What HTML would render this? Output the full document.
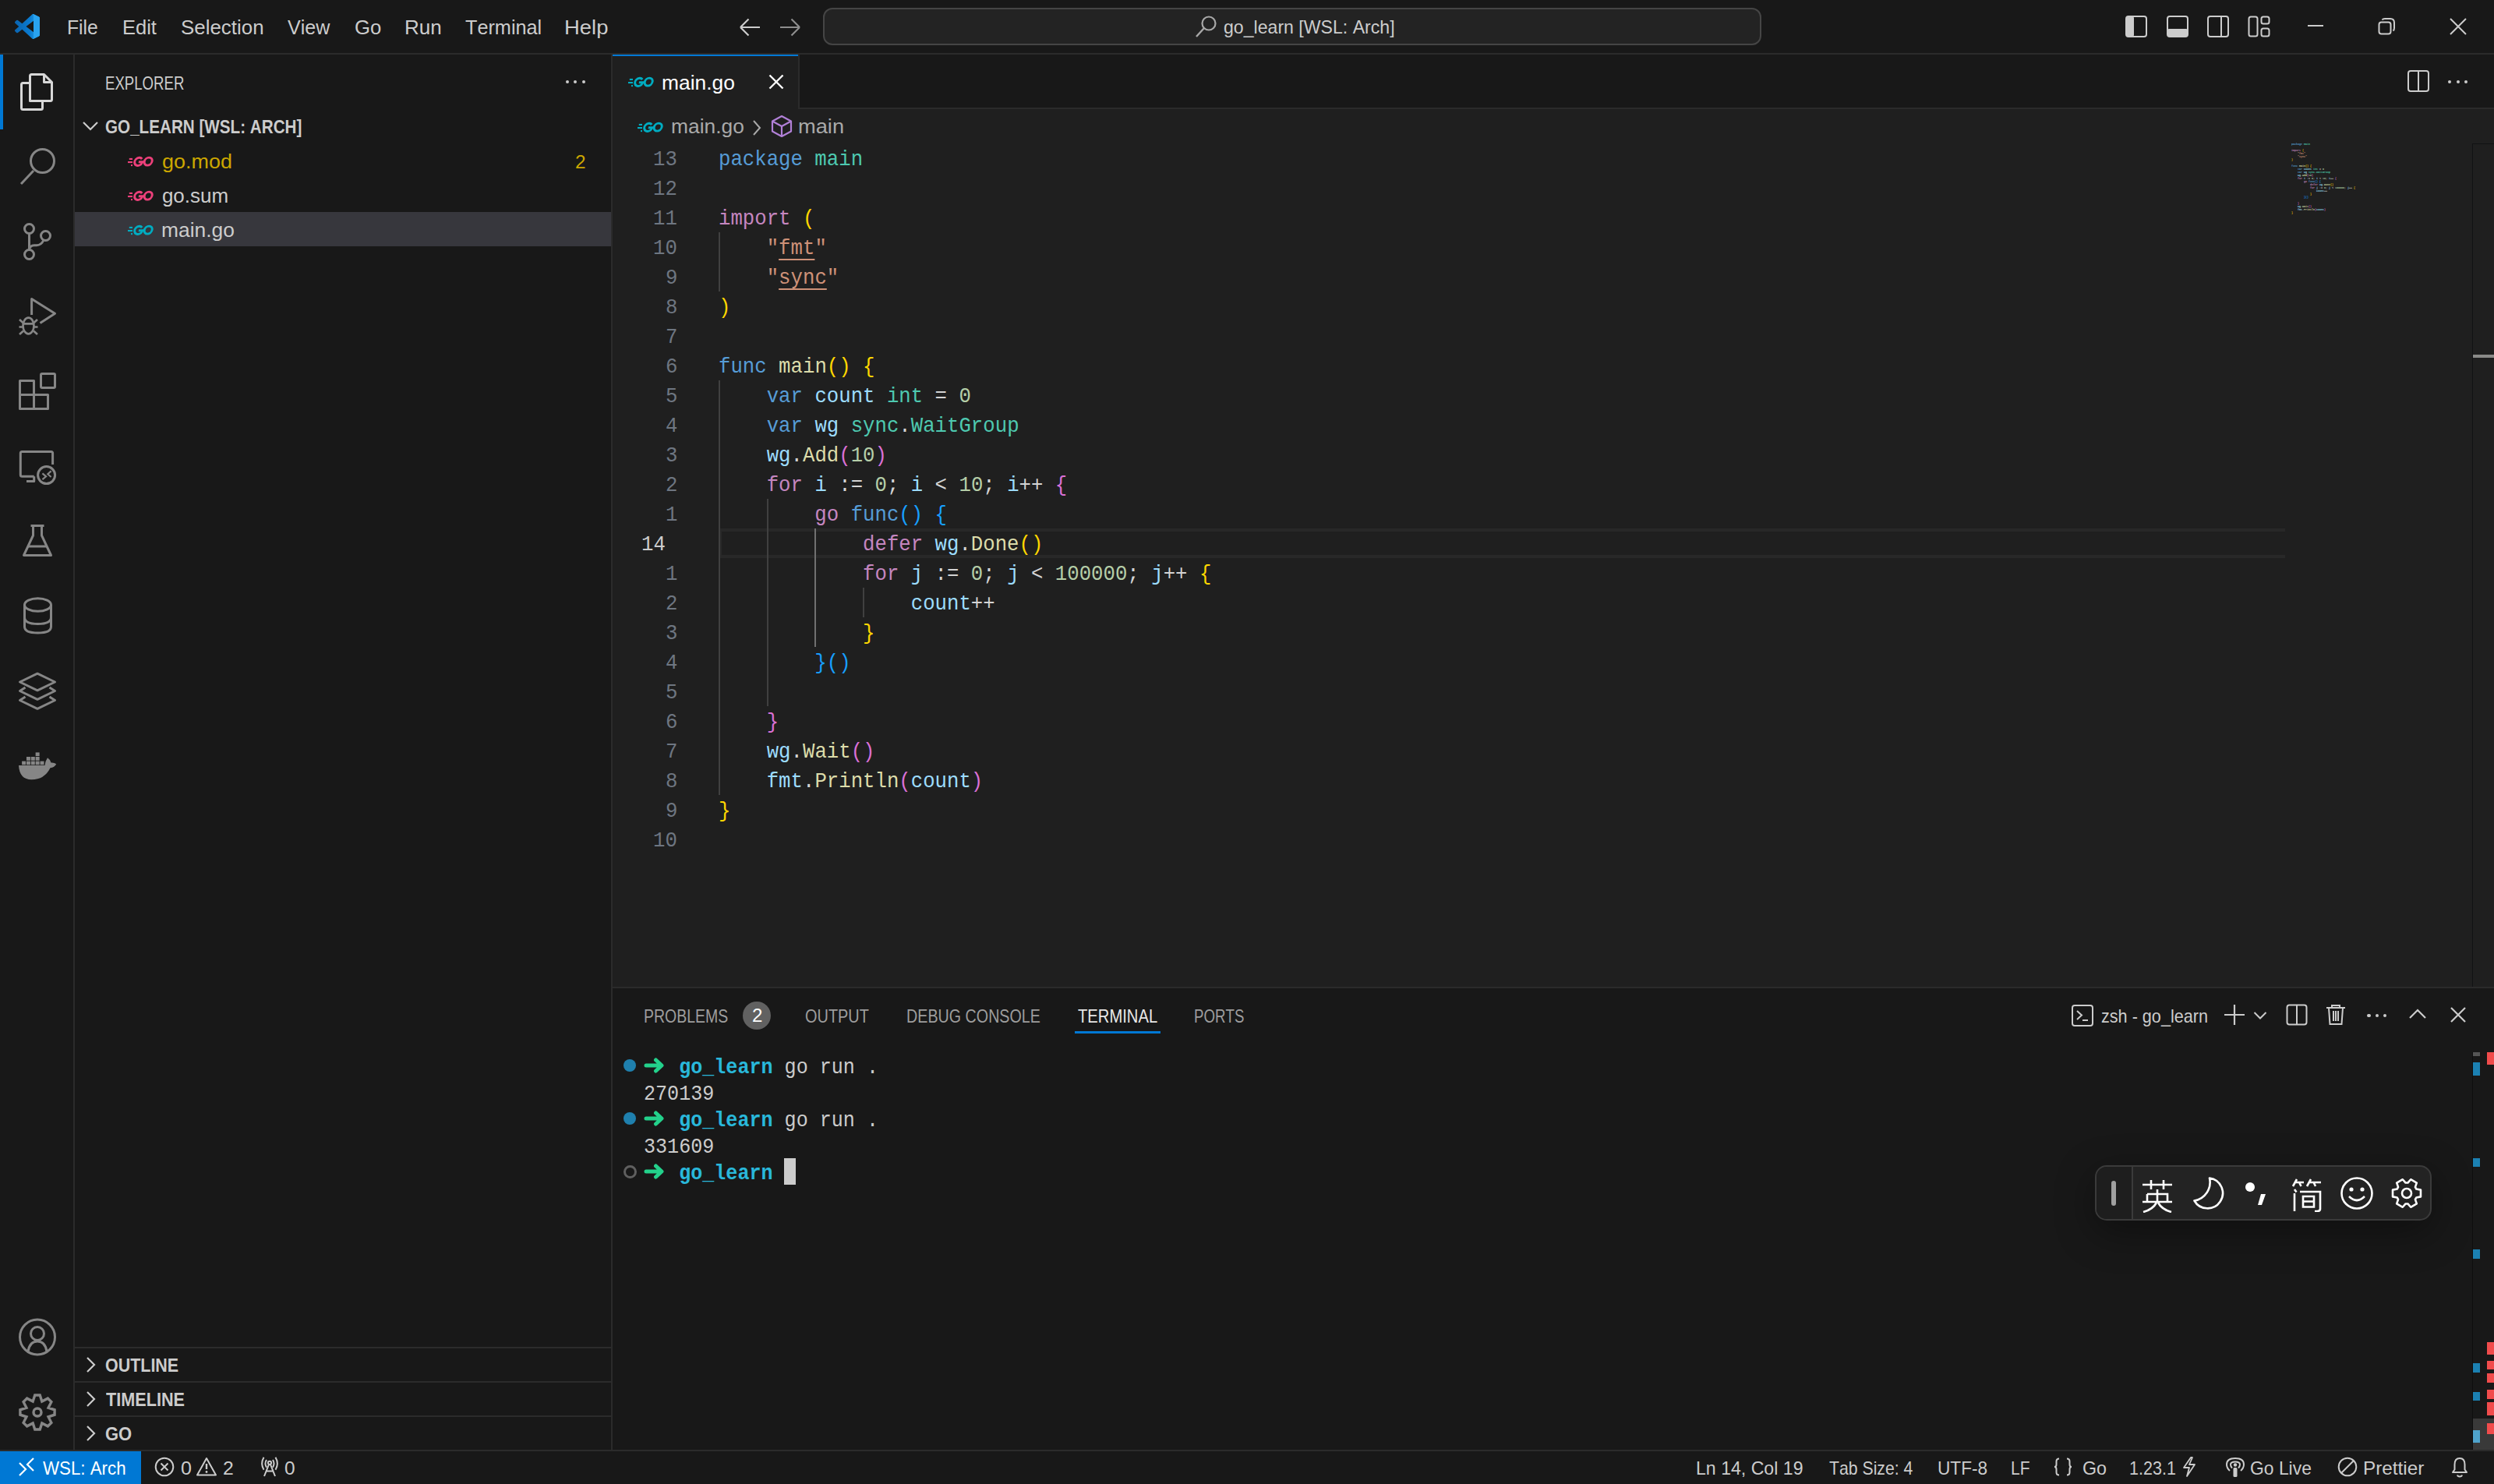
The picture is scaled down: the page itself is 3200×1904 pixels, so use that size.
<!DOCTYPE html><html><head><meta charset="utf-8"><style>
html,body{margin:0;padding:0;width:3200px;height:1904px;overflow:hidden;background:#181818;}
.r,.t{position:absolute;}
.t{white-space:pre;font-kerning:none;}
</style></head><body>
<div class="r" style="left:0px;top:0px;width:3200px;height:68px;background:#181818;"></div>
<div class="r" style="left:0px;top:68px;width:3200px;height:2px;background:#2b2b2b;"></div>
<div class="r" style="left:0px;top:70px;width:94px;height:1790px;background:#181818;"></div>
<div class="r" style="left:94px;top:70px;width:2px;height:1790px;background:#2b2b2b;"></div>
<div class="r" style="left:96px;top:70px;width:688px;height:1790px;background:#181818;"></div>
<div class="r" style="left:784px;top:70px;width:2px;height:1790px;background:#2b2b2b;"></div>
<div class="r" style="left:786px;top:70px;width:2414px;height:70px;background:#181818;"></div>
<div class="r" style="left:786px;top:138px;width:2414px;height:2px;background:#2b2b2b;"></div>
<div class="r" style="left:786px;top:140px;width:2414px;height:1126px;background:#1f1f1f;"></div>
<div class="r" style="left:786px;top:1266px;width:2414px;height:2px;background:#2b2b2b;"></div>
<div class="r" style="left:786px;top:1268px;width:2414px;height:592px;background:#181818;"></div>
<div class="r" style="left:0px;top:1860px;width:3200px;height:2px;background:#2b2b2b;"></div>
<div class="r" style="left:0px;top:1862px;width:3200px;height:42px;background:#181818;"></div>
<svg class="r" style="left:19px;top:18px;" width="32" height="32" viewBox="0 0 100 100"><defs><linearGradient id="lg" x1="0" x2="1" y1="0" y2="0"><stop offset="0" stop-color="#0a64b0"/><stop offset="0.6" stop-color="#0a7bd0"/><stop offset="1" stop-color="#2aa8f3"/></linearGradient></defs>
<path fill="url(#lg)" d="M96.46 10.8L75.86.87a6.23 6.23 0 0 0-7.1 1.2L29.35 38.04 12.19 25.01a4.16 4.16 0 0 0-5.32.24L1.36 30.26a4.16 4.16 0 0 0 0 6.16L16.25 50 1.36 63.58a4.16 4.16 0 0 0 0 6.16l5.51 5.01a4.16 4.16 0 0 0 5.32.24l17.16-13.03 39.41 35.96a6.23 6.23 0 0 0 7.1 1.2l20.6-9.92a6.24 6.24 0 0 0 3.54-5.63V16.43a6.24 6.24 0 0 0-3.54-5.63zM75.02 72.7L45.11 50l29.91-22.7z"/>
<path fill="#29a3f0" d="M75.86.87 96.46 10.8a6.24 6.24 0 0 1 3.54 5.63v67.14a6.24 6.24 0 0 1-3.54 5.63l-20.6 9.92a6.23 6.23 0 0 1-7.1-1.2 3.66 3.66 0 0 0 6.26-2.6V4.68a3.66 3.66 0 0 0-6.26-2.6 6.23 6.23 0 0 1 7.1-1.2z"/></svg>
<div class="t" style="left:85.57px;top:22.39px;font-size:26.70px;line-height:26.70px;color:#cccccc;font-family:'Liberation Sans', sans-serif;font-weight:400;transform:scale(0.9257,1.0000);transform-origin:0 22.61px;">File</div>
<div class="t" style="left:156.61px;top:22.39px;font-size:26.70px;line-height:26.70px;color:#cccccc;font-family:'Liberation Sans', sans-serif;font-weight:400;transform:scale(0.9559,1.0000);transform-origin:0 22.61px;">Edit</div>
<div class="t" style="left:231.82px;top:22.39px;font-size:26.70px;line-height:26.70px;color:#cccccc;font-family:'Liberation Sans', sans-serif;font-weight:400;transform:scale(0.9711,1.0000);transform-origin:0 22.61px;">Selection</div>
<div class="t" style="left:368.89px;top:22.39px;font-size:26.70px;line-height:26.70px;color:#cccccc;font-family:'Liberation Sans', sans-serif;font-weight:400;transform:scale(0.9409,1.0000);transform-origin:0 22.61px;">View</div>
<div class="t" style="left:454.70px;top:22.39px;font-size:26.70px;line-height:26.70px;color:#cccccc;font-family:'Liberation Sans', sans-serif;font-weight:400;transform:scale(0.9652,1.0000);transform-origin:0 22.61px;">Go</div>
<div class="t" style="left:518.86px;top:22.39px;font-size:26.70px;line-height:26.70px;color:#cccccc;font-family:'Liberation Sans', sans-serif;font-weight:400;transform:scale(0.9766,1.0000);transform-origin:0 22.61px;">Run</div>
<div class="t" style="left:597.43px;top:22.39px;font-size:26.70px;line-height:26.70px;color:#cccccc;font-family:'Liberation Sans', sans-serif;font-weight:400;transform:scale(0.9461,1.0000);transform-origin:0 22.61px;">Terminal</div>
<div class="t" style="left:724.25px;top:22.39px;font-size:26.70px;line-height:26.70px;color:#cccccc;font-family:'Liberation Sans', sans-serif;font-weight:400;transform:scale(1.0271,1.0000);transform-origin:0 22.61px;">Help</div>
<svg class="r" style="left:946px;top:21px;" width="32" height="28" viewBox="0 0 32 28"><path d="M4 14H29M4 14L14.5 3.5M4 14L14.5 24.5" stroke="#cccccc" stroke-width="2.2" fill="none"/></svg>
<svg class="r" style="left:998px;top:21px;" width="32" height="28" viewBox="0 0 32 28"><path d="M28 14H3M28 14L17.5 3.5M28 14L17.5 24.5" stroke="#8e8e8e" stroke-width="2.2" fill="none"/></svg>
<div class="r" style="left:1056px;top:10px;width:1204px;height:48px;background:#232323;box-sizing:border-box;border:2px solid #454545;border-radius:12px;"></div>
<svg class="r" style="left:1532px;top:18px;" width="32" height="32" viewBox="0 0 32 32"><circle cx="19" cy="12" r="8.5" stroke="#a8a8a8" stroke-width="2.2" fill="none"/><path d="M13 18L3 29" stroke="#a8a8a8" stroke-width="2.4" fill="none"/></svg>
<div class="t" style="left:1570.03px;top:22.68px;font-size:24.00px;line-height:24.00px;color:#cccccc;font-family:'Liberation Sans', sans-serif;font-weight:400;transform:scale(0.9628,1.0000);transform-origin:0 20.32px;">go_learn [WSL: Arch]</div>
<svg class="r" style="left:2727px;top:20px;" width="28" height="28" viewBox="0 0 28 28"><rect x="1" y="1" width="26" height="26" rx="3" stroke="#cccccc" stroke-width="2" fill="none"/><rect x="1" y="1" width="10" height="26" rx="2" fill="#cccccc"/></svg>
<svg class="r" style="left:2780px;top:20px;" width="28" height="28" viewBox="0 0 28 28"><rect x="1" y="1" width="26" height="26" rx="3" stroke="#cccccc" stroke-width="2" fill="none"/><rect x="1" y="17" width="26" height="10" rx="2" fill="#cccccc"/></svg>
<svg class="r" style="left:2832px;top:20px;" width="28" height="28" viewBox="0 0 28 28"><rect x="1" y="1" width="26" height="26" rx="3" stroke="#cccccc" stroke-width="2" fill="none"/><path d="M18 1V27" stroke="#cccccc" stroke-width="2"/></svg>
<svg class="r" style="left:2884px;top:20px;" width="30" height="30" viewBox="0 0 30 30"><rect x="1.5" y="1.5" width="11" height="25" rx="2.5" stroke="#cccccc" stroke-width="2" fill="none"/><rect x="17.5" y="1.5" width="10" height="9" rx="2.5" stroke="#cccccc" stroke-width="2" fill="none"/><rect x="17.5" y="16.5" width="10" height="10" rx="2.5" stroke="#cccccc" stroke-width="2" fill="none"/></svg>
<div class="r" style="left:2961px;top:32px;width:20px;height:2px;background:#cccccc;"></div>
<svg class="r" style="left:3050px;top:22px;" width="24" height="24" viewBox="0 0 24 24"><rect x="2.5" y="6.5" width="15" height="15" rx="3" stroke="#cccccc" stroke-width="2" fill="none"/><path d="M6.5 3.5 Q7.5 2 10 2 H17 Q22 2 22 7 V14 Q22 16.5 20.5 17.5" stroke="#cccccc" stroke-width="2" fill="none"/></svg>
<svg class="r" style="left:3142px;top:22px;" width="24" height="24" viewBox="0 0 24 24"><path d="M2 2L22 22M22 2L2 22" stroke="#cccccc" stroke-width="2" fill="none"/></svg>
<div class="r" style="left:0px;top:70px;width:4px;height:96px;background:#0078d4;"></div>
<svg class="r" style="left:20px;top:88px;" width="54" height="60" viewBox="20 88 54 60"><g fill="none" stroke="#d7d7d7" stroke-width="3" stroke-linejoin="round"><path d="M38.5 129.5V97.5Q38.5 95.5 40.5 95.5H56.5L66.5 105.5V127.5Q66.5 129.5 64.5 129.5Z"/>
<path d="M56.5 95.5V105.5H66.5"/>
<path d="M38.5 106.5H29.5Q27.5 106.5 27.5 108.5V138.5Q27.5 140.5 29.5 140.5H52.5Q54.5 140.5 54.5 138.5V129.5"/></g></svg>
<svg class="r" style="left:20px;top:184px;" width="56" height="58" viewBox="20 184 56 58"><g fill="none" stroke="#868686" stroke-width="3" stroke-linejoin="round"><circle cx="54.5" cy="206.5" r="15"/><path d="M27 236L43 219" stroke-linecap="butt"/></g></svg>
<svg class="r" style="left:24px;top:280px;" width="48" height="60" viewBox="24 280 48 60"><g fill="none" stroke="#868686" stroke-width="3" stroke-linejoin="round"><circle cx="37.5" cy="293.5" r="6"/><circle cx="58.5" cy="302.5" r="6"/><circle cx="37.5" cy="326.5" r="6"/><path d="M37.5 299.5V320.5"/><path d="M56 308Q53 314.7 47 314.7H44Q38 315 37.5 320.5"/></g></svg>
<svg class="r" style="left:20px;top:376px;" width="56" height="60" viewBox="20 376 56 60"><g fill="none" stroke="#868686" stroke-width="2.7" stroke-linejoin="round"><path d="M40.6 404V383.5L70.5 402.3L51.5 414.5" stroke-width="3"/>
<ellipse cx="36.5" cy="418" rx="7" ry="10.3"/>
<path d="M29.5 415.4H43.5M24.5 419.5H29.5M43.5 419.5H48.5M25 410L30 414.5M48 410L43 414.5M25 429L30 424.5M48 429L43 424.5"/></g></svg>
<svg class="r" style="left:20px;top:472px;" width="56" height="60" viewBox="20 472 56 60"><g fill="none" stroke="#868686" stroke-width="3" stroke-linejoin="round"><path d="M25.5 488.5H43.5V506.5H61.5V524.5H25.5Z"/><path d="M25.5 506.5H43.5V524.5"/><rect x="52.5" y="479.5" width="18" height="18" rx="1.5"/></g></svg>
<svg class="r" style="left:20px;top:572px;" width="58" height="56" viewBox="20 572 58 56"><g fill="none" stroke="#868686" stroke-width="3" stroke-linejoin="round"><path d="M43.7 611.3H28.3Q26.3 611.3 26.3 609.3V581.4Q26.3 579.4 28.3 579.4H65.6Q67.6 579.4 67.6 581.4V596"/>
<path d="M43.7 611.3V617.5H34"/><circle cx="59.6" cy="609.6" r="11"/><path d="M54.4 607.4L59.1 611.3L54.4 615.2M65.6 604.4L61.3 608.3L65.6 612" stroke-width="2.2" stroke-linejoin="miter"/></g></svg>
<svg class="r" style="left:24px;top:668px;" width="48" height="52" viewBox="24 668 48 52"><g fill="none" stroke="#868686" stroke-width="3" stroke-linejoin="round"><path d="M39.5 674.5H56.5M42.5 674.5V687L30.5 712.5H65.5L53.5 687V674.5"/><path d="M35 701H61"/></g></svg>
<svg class="r" style="left:24px;top:760px;" width="48" height="58" viewBox="24 760 48 58"><g fill="none" stroke="#868686" stroke-width="3" stroke-linejoin="round"><ellipse cx="48.5" cy="776" rx="17" ry="8.3"/><path d="M31.5 776V804Q31.5 812 48.5 812Q65.5 812 65.5 804V776"/><path d="M31.5 792Q31.5 800.5 48.5 800.5Q65.5 800.5 65.5 792"/></g></svg>
<svg class="r" style="left:20px;top:856px;" width="56" height="60" viewBox="20 856 56 60"><g fill="none" stroke="#868686" stroke-width="3" stroke-linejoin="round"><path d="M48 864.2L70.5 875L48 885.8L25.5 875Z"/><path d="M32.5 882L25.5 886.5L48 897.3L70.5 886.5L63.5 882"/><path d="M32.5 894L25.5 898.5L48 909.3L70.5 898.5L63.5 894"/></g></svg>
<svg class="r" style="left:20px;top:960px;" width="56" height="46" viewBox="20 960 56 46"><g fill="#868686"><path d="M24 982H57.5Q58 976.5 61 972.3Q64.5 974.5 65.5 978.6Q69.5 978.2 72.2 980.2Q70 984.8 64.5 985.2Q57 1000.2 40.5 1000.2Q25 1000.2 24 982Z"/><rect x="28.10" y="976.60" width="5" height="4.7"/><rect x="33.95" y="976.60" width="5" height="4.7"/><rect x="39.80" y="976.60" width="5" height="4.7"/><rect x="45.65" y="976.60" width="5" height="4.7"/><rect x="51.50" y="976.60" width="5" height="4.7"/><rect x="33.95" y="971.00" width="5" height="4.7"/><rect x="39.80" y="971.00" width="5" height="4.7"/><rect x="45.65" y="971.00" width="5" height="4.7"/><rect x="45.65" y="965.40" width="5" height="4.7"/></g></svg>
<svg class="r" style="left:20px;top:1686px;" width="56" height="58" viewBox="20 1686 56 58"><g fill="none" stroke="#868686" stroke-width="3" stroke-linejoin="round"><circle cx="48" cy="1715.5" r="22.5"/><circle cx="48" cy="1711" r="8.5"/><path d="M36 1734Q38 1721 48 1721Q58 1721 60 1734"/></g></svg>
<svg class="r" style="left:20px;top:1782px;" width="56" height="60" viewBox="20 1782 56 60"><g fill="none" stroke="#868686" stroke-width="3.4" stroke-linejoin="round"><path d="M42.18 1797.96 L44.78 1789.93 L51.22 1789.93 L53.82 1797.96 L61.33 1794.12 L65.88 1798.67 L62.04 1806.18 L70.07 1808.78 L70.07 1815.22 L62.04 1817.82 L65.88 1825.33 L61.33 1829.88 L53.82 1826.04 L51.22 1834.07 L44.78 1834.07 L42.18 1826.04 L34.67 1829.88 L30.12 1825.33 L33.96 1817.82 L25.93 1815.22 L25.93 1808.78 L33.96 1806.18 L30.12 1798.67 L34.67 1794.12Z" stroke-linejoin="miter"/><circle cx="48" cy="1812" r="5"/></g></svg>
<div class="t" style="left:135.47px;top:95.86px;font-size:23.20px;line-height:23.20px;color:#cccccc;font-family:'Liberation Sans', sans-serif;font-weight:400;transform:scale(0.8024,1.0000);transform-origin:0 19.64px;">EXPLORER</div>
<div class="r" style="left:725.5px;top:103px;width:4.2px;height:4.2px;border-radius:50%;background:#cccccc"></div>
<div class="r" style="left:736.0px;top:103px;width:4.2px;height:4.2px;border-radius:50%;background:#cccccc"></div>
<div class="r" style="left:746.5px;top:103px;width:4.2px;height:4.2px;border-radius:50%;background:#cccccc"></div>
<svg class="r" style="left:104px;top:154px;" width="24" height="16" viewBox="0 0 24 16"><path d="M3 3L12 12L21 3" stroke="#cccccc" stroke-width="2.2" fill="none"/></svg>
<div class="t" style="left:135.15px;top:151.96px;font-size:23.20px;line-height:23.20px;color:#cccccc;font-family:'Liberation Sans', sans-serif;font-weight:700;transform:scale(0.8906,1.0000);transform-origin:0 19.64px;">GO_LEARN [WSL: ARCH]</div>
<div class="r" style="left:96px;top:272px;width:688px;height:44px;background:#37373d;"></div>
<svg class="r" style="left:164px;top:199.5px;" width="33" height="14" viewBox="0 -0.5 33 14"><g fill="#ec407a"><rect x="1.8" y="2.4" width="4.2" height="2.1"/><rect x="0" y="6.5" width="6" height="2.1"/><rect x="4" y="10.6" width="2" height="2"/></g><g fill="none" stroke="#ec407a" stroke-width="2.9" transform="translate(1.3 0) skewX(-11)"><path d="M17.6 3.4 A5.1 5.1 0 1 0 18.8 8.2 L19.2 7.3 H14"/><ellipse cx="26.2" cy="6.6" rx="4.9" ry="5.0"/></g></svg>
<div class="t" style="left:207.87px;top:193.99px;font-size:26.00px;line-height:26.00px;color:#cca700;font-family:'Liberation Sans', sans-serif;font-weight:400;transform:scale(1.0363,1.0000);transform-origin:0 22.01px;">go.mod</div>
<div class="t" style="left:738.27px;top:195.68px;font-size:24.00px;line-height:24.00px;color:#cca700;font-family:'Liberation Sans', sans-serif;font-weight:400;transform:scale(1.0152,1.0000);transform-origin:0 20.32px;">2</div>
<svg class="r" style="left:164px;top:243.5px;" width="33" height="14" viewBox="0 -0.5 33 14"><g fill="#ec407a"><rect x="1.8" y="2.4" width="4.2" height="2.1"/><rect x="0" y="6.5" width="6" height="2.1"/><rect x="4" y="10.6" width="2" height="2"/></g><g fill="none" stroke="#ec407a" stroke-width="2.9" transform="translate(1.3 0) skewX(-11)"><path d="M17.6 3.4 A5.1 5.1 0 1 0 18.8 8.2 L19.2 7.3 H14"/><ellipse cx="26.2" cy="6.6" rx="4.9" ry="5.0"/></g></svg>
<div class="t" style="left:207.91px;top:237.99px;font-size:26.00px;line-height:26.00px;color:#cccccc;font-family:'Liberation Sans', sans-serif;font-weight:400;">go.sum</div>
<svg class="r" style="left:164px;top:287.5px;" width="33" height="14" viewBox="0 -0.5 33 14"><g fill="#00acc1"><rect x="1.8" y="2.4" width="4.2" height="2.1"/><rect x="0" y="6.5" width="6" height="2.1"/><rect x="4" y="10.6" width="2" height="2"/></g><g fill="none" stroke="#00acc1" stroke-width="2.9" transform="translate(1.3 0) skewX(-11)"><path d="M17.6 3.4 A5.1 5.1 0 1 0 18.8 8.2 L19.2 7.3 H14"/><ellipse cx="26.2" cy="6.6" rx="4.9" ry="5.0"/></g></svg>
<div class="t" style="left:207.25px;top:281.99px;font-size:26.00px;line-height:26.00px;color:#cccccc;font-family:'Liberation Sans', sans-serif;font-weight:400;transform:scale(1.0147,1.0000);transform-origin:0 22.01px;">main.go</div>
<div class="r" style="left:96px;top:1728px;width:688px;height:2px;background:#2b2b2b;"></div>
<svg class="r" style="left:108px;top:1740px;" width="18" height="22" viewBox="0 0 18 22"><path d="M4 2L13 11L4 20" stroke="#cccccc" stroke-width="2.2" fill="none"/></svg>
<div class="t" style="left:135.12px;top:1741.36px;font-size:23.20px;line-height:23.20px;color:#cccccc;font-family:'Liberation Sans', sans-serif;font-weight:700;transform:scale(0.9254,1.0000);transform-origin:0 19.64px;">OUTLINE</div>
<div class="r" style="left:96px;top:1772px;width:688px;height:2px;background:#2b2b2b;"></div>
<svg class="r" style="left:108px;top:1784px;" width="18" height="22" viewBox="0 0 18 22"><path d="M4 2L13 11L4 20" stroke="#cccccc" stroke-width="2.2" fill="none"/></svg>
<div class="t" style="left:135.76px;top:1785.36px;font-size:23.20px;line-height:23.20px;color:#cccccc;font-family:'Liberation Sans', sans-serif;font-weight:700;transform:scale(0.9337,1.0000);transform-origin:0 19.64px;">TIMELINE</div>
<div class="r" style="left:96px;top:1816px;width:688px;height:2px;background:#2b2b2b;"></div>
<svg class="r" style="left:108px;top:1828px;" width="18" height="22" viewBox="0 0 18 22"><path d="M4 2L13 11L4 20" stroke="#cccccc" stroke-width="2.2" fill="none"/></svg>
<div class="t" style="left:135.10px;top:1829.36px;font-size:23.20px;line-height:23.20px;color:#cccccc;font-family:'Liberation Sans', sans-serif;font-weight:700;transform:scale(0.9483,1.0000);transform-origin:0 19.64px;">GO</div>
<div class="r" style="left:786px;top:70px;width:238px;height:70px;background:#1f1f1f;"></div>
<div class="r" style="left:786px;top:70px;width:238px;height:2px;background:#0078d4;"></div>
<div class="r" style="left:1024px;top:70px;width:2px;height:70px;background:#2b2b2b;"></div>
<div class="r" style="left:1026px;top:138px;width:2174px;height:2px;background:#2b2b2b;"></div>
<div class="r" style="left:786px;top:138px;width:238px;height:2px;background:#1f1f1f;"></div>
<svg class="r" style="left:806px;top:98.0px;" width="33" height="14" viewBox="0 -0.5 33 14"><g fill="#00acc1"><rect x="1.8" y="2.4" width="4.2" height="2.1"/><rect x="0" y="6.5" width="6" height="2.1"/><rect x="4" y="10.6" width="2" height="2"/></g><g fill="none" stroke="#00acc1" stroke-width="2.9" transform="translate(1.3 0) skewX(-11)"><path d="M17.6 3.4 A5.1 5.1 0 1 0 18.8 8.2 L19.2 7.3 H14"/><ellipse cx="26.2" cy="6.6" rx="4.9" ry="5.0"/></g></svg>
<div class="t" style="left:849.25px;top:92.99px;font-size:26.00px;line-height:26.00px;color:#ffffff;font-family:'Liberation Sans', sans-serif;font-weight:400;transform:scale(1.0147,1.0000);transform-origin:0 22.01px;">main.go</div>
<svg class="r" style="left:985px;top:94px;" width="22" height="22" viewBox="0 0 22 22"><path d="M2.5 2.5L19.5 19.5M19.5 2.5L2.5 19.5" stroke="#ffffff" stroke-width="2.4" fill="none"/></svg>
<svg class="r" style="left:3088px;top:89px;" width="30" height="30" viewBox="0 0 30 30"><rect x="2" y="2" width="26" height="26" rx="3" stroke="#cccccc" stroke-width="2" fill="none"/><path d="M15 2V28" stroke="#cccccc" stroke-width="2"/></svg>
<div class="r" style="left:3141.0px;top:103px;width:4.2px;height:4.2px;border-radius:50%;background:#cccccc"></div>
<div class="r" style="left:3151.5px;top:103px;width:4.2px;height:4.2px;border-radius:50%;background:#cccccc"></div>
<div class="r" style="left:3162.0px;top:103px;width:4.2px;height:4.2px;border-radius:50%;background:#cccccc"></div>
<svg class="r" style="left:818px;top:155.5px;" width="33" height="14" viewBox="0 -0.5 33 14"><g fill="#00acc1"><rect x="1.8" y="2.4" width="4.2" height="2.1"/><rect x="0" y="6.5" width="6" height="2.1"/><rect x="4" y="10.6" width="2" height="2"/></g><g fill="none" stroke="#00acc1" stroke-width="2.9" transform="translate(1.3 0) skewX(-11)"><path d="M17.6 3.4 A5.1 5.1 0 1 0 18.8 8.2 L19.2 7.3 H14"/><ellipse cx="26.2" cy="6.6" rx="4.9" ry="5.0"/></g></svg>
<div class="t" style="left:861.25px;top:149.49px;font-size:26.00px;line-height:26.00px;color:#a9a9a9;font-family:'Liberation Sans', sans-serif;font-weight:400;transform:scale(1.0147,1.0000);transform-origin:0 22.01px;">main.go</div>
<svg class="r" style="left:962px;top:152px;" width="18" height="24" viewBox="0 0 18 24"><path d="M5 3L13 12L5 21" stroke="#a9a9a9" stroke-width="2" fill="none"/></svg>
<svg class="r" style="left:988px;top:146px;" width="30" height="32" viewBox="0 0 30 32"><g fill="none" stroke="#b180d7" stroke-width="2.2" stroke-linejoin="round"><path d="M15 3L27 9.5V22.5L15 29L3 22.5V9.5Z"/><path d="M3 9.5L15 16L27 9.5M15 16V29"/></g></svg>
<div class="t" style="left:1023.69px;top:149.49px;font-size:26.00px;line-height:26.00px;color:#a9a9a9;font-family:'Liberation Sans', sans-serif;font-weight:400;transform:scale(1.0484,1.0000);transform-origin:0 22.01px;">main</div>
<div class="r" style="left:924px;top:678px;width:2008px;height:38px;background:transparent;box-sizing:border-box;border:solid #282828;border-width:4px 0 4px 2px;"></div>
<div class="r" style="left:922.0px;top:298px;width:2px;height:76px;background:#404040;"></div>
<div class="r" style="left:922.0px;top:488px;width:2px;height:532px;background:#404040;"></div>
<div class="r" style="left:983.668px;top:640px;width:2px;height:266px;background:#404040;"></div>
<div class="r" style="left:1045.336px;top:678px;width:2px;height:152px;background:#707070;"></div>
<div class="r" style="left:1107.004px;top:754px;width:2px;height:38px;background:#404040;"></div>
<div class="t" style="left:922.00px;top:190.55px;font:28.00px/28.00px 'Liberation Mono',monospace;transform:scaleX(0.9177);transform-origin:0 0"><span style="color:#569cd6">package</span><span style="color:#d4d4d4"> </span><span style="color:#4ec9b0">main</span></div>
<div class="t" style="left:838.37px;top:190.55px;font:28.00px/28.00px 'Liberation Mono',monospace;transform:scaleX(0.9177);transform-origin:0 0;color:#6e7681">13</div>
<div class="t" style="left:838.37px;top:228.55px;font:28.00px/28.00px 'Liberation Mono',monospace;transform:scaleX(0.9177);transform-origin:0 0;color:#6e7681">12</div>
<div class="t" style="left:922.00px;top:266.55px;font:28.00px/28.00px 'Liberation Mono',monospace;transform:scaleX(0.9177);transform-origin:0 0"><span style="color:#c586c0">import</span><span style="color:#d4d4d4"> </span><span style="color:#ffd700">(</span></div>
<div class="t" style="left:838.37px;top:266.55px;font:28.00px/28.00px 'Liberation Mono',monospace;transform:scaleX(0.9177);transform-origin:0 0;color:#6e7681">11</div>
<div class="t" style="left:922.00px;top:304.55px;font:28.00px/28.00px 'Liberation Mono',monospace;transform:scaleX(0.9177);transform-origin:0 0"><span style="color:#d4d4d4">    </span><span style="color:#ce9178">&quot;</span><span style="color:#ce9178;text-decoration:underline;text-decoration-thickness:2px;text-underline-offset:6px;text-decoration-skip-ink:none">fmt</span><span style="color:#ce9178">&quot;</span></div>
<div class="t" style="left:838.37px;top:304.55px;font:28.00px/28.00px 'Liberation Mono',monospace;transform:scaleX(0.9177);transform-origin:0 0;color:#6e7681">10</div>
<div class="t" style="left:922.00px;top:342.55px;font:28.00px/28.00px 'Liberation Mono',monospace;transform:scaleX(0.9177);transform-origin:0 0"><span style="color:#d4d4d4">    </span><span style="color:#ce9178">&quot;</span><span style="color:#ce9178;text-decoration:underline;text-decoration-thickness:2px;text-underline-offset:6px;text-decoration-skip-ink:none">sync</span><span style="color:#ce9178">&quot;</span></div>
<div class="t" style="left:853.78px;top:342.55px;font:28.00px/28.00px 'Liberation Mono',monospace;transform:scaleX(0.9177);transform-origin:0 0;color:#6e7681">9</div>
<div class="t" style="left:922.00px;top:380.55px;font:28.00px/28.00px 'Liberation Mono',monospace;transform:scaleX(0.9177);transform-origin:0 0"><span style="color:#ffd700">)</span></div>
<div class="t" style="left:853.78px;top:380.55px;font:28.00px/28.00px 'Liberation Mono',monospace;transform:scaleX(0.9177);transform-origin:0 0;color:#6e7681">8</div>
<div class="t" style="left:853.78px;top:418.55px;font:28.00px/28.00px 'Liberation Mono',monospace;transform:scaleX(0.9177);transform-origin:0 0;color:#6e7681">7</div>
<div class="t" style="left:922.00px;top:456.55px;font:28.00px/28.00px 'Liberation Mono',monospace;transform:scaleX(0.9177);transform-origin:0 0"><span style="color:#569cd6">func</span><span style="color:#d4d4d4"> </span><span style="color:#dcdcaa">main</span><span style="color:#ffd700">()</span><span style="color:#d4d4d4"> </span><span style="color:#ffd700">{</span></div>
<div class="t" style="left:853.78px;top:456.55px;font:28.00px/28.00px 'Liberation Mono',monospace;transform:scaleX(0.9177);transform-origin:0 0;color:#6e7681">6</div>
<div class="t" style="left:922.00px;top:494.55px;font:28.00px/28.00px 'Liberation Mono',monospace;transform:scaleX(0.9177);transform-origin:0 0"><span style="color:#d4d4d4">    </span><span style="color:#569cd6">var</span><span style="color:#d4d4d4"> </span><span style="color:#9cdcfe">count</span><span style="color:#d4d4d4"> </span><span style="color:#4ec9b0">int</span><span style="color:#d4d4d4"> = </span><span style="color:#b5cea8">0</span></div>
<div class="t" style="left:853.78px;top:494.55px;font:28.00px/28.00px 'Liberation Mono',monospace;transform:scaleX(0.9177);transform-origin:0 0;color:#6e7681">5</div>
<div class="t" style="left:922.00px;top:532.55px;font:28.00px/28.00px 'Liberation Mono',monospace;transform:scaleX(0.9177);transform-origin:0 0"><span style="color:#d4d4d4">    </span><span style="color:#569cd6">var</span><span style="color:#d4d4d4"> </span><span style="color:#9cdcfe">wg</span><span style="color:#d4d4d4"> </span><span style="color:#4ec9b0">sync</span><span style="color:#d4d4d4">.</span><span style="color:#4ec9b0">WaitGroup</span></div>
<div class="t" style="left:853.78px;top:532.55px;font:28.00px/28.00px 'Liberation Mono',monospace;transform:scaleX(0.9177);transform-origin:0 0;color:#6e7681">4</div>
<div class="t" style="left:922.00px;top:570.55px;font:28.00px/28.00px 'Liberation Mono',monospace;transform:scaleX(0.9177);transform-origin:0 0"><span style="color:#d4d4d4">    </span><span style="color:#9cdcfe">wg</span><span style="color:#d4d4d4">.</span><span style="color:#dcdcaa">Add</span><span style="color:#da70d6">(</span><span style="color:#b5cea8">10</span><span style="color:#da70d6">)</span></div>
<div class="t" style="left:853.78px;top:570.55px;font:28.00px/28.00px 'Liberation Mono',monospace;transform:scaleX(0.9177);transform-origin:0 0;color:#6e7681">3</div>
<div class="t" style="left:922.00px;top:608.55px;font:28.00px/28.00px 'Liberation Mono',monospace;transform:scaleX(0.9177);transform-origin:0 0"><span style="color:#d4d4d4">    </span><span style="color:#c586c0">for</span><span style="color:#d4d4d4"> </span><span style="color:#9cdcfe">i</span><span style="color:#d4d4d4"> := </span><span style="color:#b5cea8">0</span><span style="color:#d4d4d4">; </span><span style="color:#9cdcfe">i</span><span style="color:#d4d4d4"> &lt; </span><span style="color:#b5cea8">10</span><span style="color:#d4d4d4">; </span><span style="color:#9cdcfe">i</span><span style="color:#d4d4d4">++ </span><span style="color:#da70d6">{</span></div>
<div class="t" style="left:853.78px;top:608.55px;font:28.00px/28.00px 'Liberation Mono',monospace;transform:scaleX(0.9177);transform-origin:0 0;color:#6e7681">2</div>
<div class="t" style="left:922.00px;top:646.55px;font:28.00px/28.00px 'Liberation Mono',monospace;transform:scaleX(0.9177);transform-origin:0 0"><span style="color:#d4d4d4">        </span><span style="color:#c586c0">go</span><span style="color:#d4d4d4"> </span><span style="color:#569cd6">func</span><span style="color:#179fff">()</span><span style="color:#d4d4d4"> </span><span style="color:#179fff">{</span></div>
<div class="t" style="left:853.78px;top:646.55px;font:28.00px/28.00px 'Liberation Mono',monospace;transform:scaleX(0.9177);transform-origin:0 0;color:#6e7681">1</div>
<div class="t" style="left:922.00px;top:684.55px;font:28.00px/28.00px 'Liberation Mono',monospace;transform:scaleX(0.9177);transform-origin:0 0"><span style="color:#d4d4d4">            </span><span style="color:#c586c0">defer</span><span style="color:#d4d4d4"> </span><span style="color:#9cdcfe">wg</span><span style="color:#d4d4d4">.</span><span style="color:#dcdcaa">Done</span><span style="color:#ffd700">()</span></div>
<div class="t" style="left:823.37px;top:684.55px;font:28.00px/28.00px 'Liberation Mono',monospace;transform:scaleX(0.9177);transform-origin:0 0;color:#cccccc">14</div>
<div class="t" style="left:922.00px;top:722.55px;font:28.00px/28.00px 'Liberation Mono',monospace;transform:scaleX(0.9177);transform-origin:0 0"><span style="color:#d4d4d4">            </span><span style="color:#c586c0">for</span><span style="color:#d4d4d4"> </span><span style="color:#9cdcfe">j</span><span style="color:#d4d4d4"> := </span><span style="color:#b5cea8">0</span><span style="color:#d4d4d4">; </span><span style="color:#9cdcfe">j</span><span style="color:#d4d4d4"> &lt; </span><span style="color:#b5cea8">100000</span><span style="color:#d4d4d4">; </span><span style="color:#9cdcfe">j</span><span style="color:#d4d4d4">++ </span><span style="color:#ffd700">{</span></div>
<div class="t" style="left:853.78px;top:722.55px;font:28.00px/28.00px 'Liberation Mono',monospace;transform:scaleX(0.9177);transform-origin:0 0;color:#6e7681">1</div>
<div class="t" style="left:922.00px;top:760.55px;font:28.00px/28.00px 'Liberation Mono',monospace;transform:scaleX(0.9177);transform-origin:0 0"><span style="color:#d4d4d4">                </span><span style="color:#9cdcfe">count</span><span style="color:#d4d4d4">++</span></div>
<div class="t" style="left:853.78px;top:760.55px;font:28.00px/28.00px 'Liberation Mono',monospace;transform:scaleX(0.9177);transform-origin:0 0;color:#6e7681">2</div>
<div class="t" style="left:922.00px;top:798.55px;font:28.00px/28.00px 'Liberation Mono',monospace;transform:scaleX(0.9177);transform-origin:0 0"><span style="color:#d4d4d4">            </span><span style="color:#ffd700">}</span></div>
<div class="t" style="left:853.78px;top:798.55px;font:28.00px/28.00px 'Liberation Mono',monospace;transform:scaleX(0.9177);transform-origin:0 0;color:#6e7681">3</div>
<div class="t" style="left:922.00px;top:836.55px;font:28.00px/28.00px 'Liberation Mono',monospace;transform:scaleX(0.9177);transform-origin:0 0"><span style="color:#d4d4d4">        </span><span style="color:#179fff">}()</span></div>
<div class="t" style="left:853.78px;top:836.55px;font:28.00px/28.00px 'Liberation Mono',monospace;transform:scaleX(0.9177);transform-origin:0 0;color:#6e7681">4</div>
<div class="t" style="left:853.78px;top:874.55px;font:28.00px/28.00px 'Liberation Mono',monospace;transform:scaleX(0.9177);transform-origin:0 0;color:#6e7681">5</div>
<div class="t" style="left:922.00px;top:912.55px;font:28.00px/28.00px 'Liberation Mono',monospace;transform:scaleX(0.9177);transform-origin:0 0"><span style="color:#d4d4d4">    </span><span style="color:#da70d6">}</span></div>
<div class="t" style="left:853.78px;top:912.55px;font:28.00px/28.00px 'Liberation Mono',monospace;transform:scaleX(0.9177);transform-origin:0 0;color:#6e7681">6</div>
<div class="t" style="left:922.00px;top:950.55px;font:28.00px/28.00px 'Liberation Mono',monospace;transform:scaleX(0.9177);transform-origin:0 0"><span style="color:#d4d4d4">    </span><span style="color:#9cdcfe">wg</span><span style="color:#d4d4d4">.</span><span style="color:#dcdcaa">Wait</span><span style="color:#da70d6">()</span></div>
<div class="t" style="left:853.78px;top:950.55px;font:28.00px/28.00px 'Liberation Mono',monospace;transform:scaleX(0.9177);transform-origin:0 0;color:#6e7681">7</div>
<div class="t" style="left:922.00px;top:988.55px;font:28.00px/28.00px 'Liberation Mono',monospace;transform:scaleX(0.9177);transform-origin:0 0"><span style="color:#d4d4d4">    </span><span style="color:#9cdcfe">fmt</span><span style="color:#d4d4d4">.</span><span style="color:#dcdcaa">Println</span><span style="color:#da70d6">(</span><span style="color:#9cdcfe">count</span><span style="color:#da70d6">)</span></div>
<div class="t" style="left:853.78px;top:988.55px;font:28.00px/28.00px 'Liberation Mono',monospace;transform:scaleX(0.9177);transform-origin:0 0;color:#6e7681">8</div>
<div class="t" style="left:922.00px;top:1026.55px;font:28.00px/28.00px 'Liberation Mono',monospace;transform:scaleX(0.9177);transform-origin:0 0"><span style="color:#ffd700">}</span></div>
<div class="t" style="left:853.78px;top:1026.55px;font:28.00px/28.00px 'Liberation Mono',monospace;transform:scaleX(0.9177);transform-origin:0 0;color:#6e7681">9</div>
<div class="t" style="left:838.37px;top:1064.55px;font:28.00px/28.00px 'Liberation Mono',monospace;transform:scaleX(0.9177);transform-origin:0 0;color:#6e7681">10</div>
<div class="t" style="left:2940px;top:183px;font:4px/4px 'Liberation Mono',monospace;font-weight:700;transform:scaleX(0.8333);transform-origin:0 0;opacity:0.9"><span style="color:#569cd6">package</span><span style="color:#d4d4d4"> </span><span style="color:#4ec9b0">main</span></div>
<div class="t" style="left:2940px;top:191px;font:4px/4px 'Liberation Mono',monospace;font-weight:700;transform:scaleX(0.8333);transform-origin:0 0;opacity:0.9"><span style="color:#c586c0">import</span><span style="color:#d4d4d4"> </span><span style="color:#ffd700">(</span></div>
<div class="t" style="left:2940px;top:195px;font:4px/4px 'Liberation Mono',monospace;font-weight:700;transform:scaleX(0.8333);transform-origin:0 0;opacity:0.9"><span style="color:#d4d4d4">    </span><span style="color:#ce9178">&quot;</span><span style="color:#ce9178">fmt</span><span style="color:#ce9178">&quot;</span></div>
<div class="t" style="left:2940px;top:199px;font:4px/4px 'Liberation Mono',monospace;font-weight:700;transform:scaleX(0.8333);transform-origin:0 0;opacity:0.9"><span style="color:#d4d4d4">    </span><span style="color:#ce9178">&quot;</span><span style="color:#ce9178">sync</span><span style="color:#ce9178">&quot;</span></div>
<div class="t" style="left:2940px;top:203px;font:4px/4px 'Liberation Mono',monospace;font-weight:700;transform:scaleX(0.8333);transform-origin:0 0;opacity:0.9"><span style="color:#ffd700">)</span></div>
<div class="t" style="left:2940px;top:211px;font:4px/4px 'Liberation Mono',monospace;font-weight:700;transform:scaleX(0.8333);transform-origin:0 0;opacity:0.9"><span style="color:#569cd6">func</span><span style="color:#d4d4d4"> </span><span style="color:#dcdcaa">main</span><span style="color:#ffd700">()</span><span style="color:#d4d4d4"> </span><span style="color:#ffd700">{</span></div>
<div class="t" style="left:2940px;top:215px;font:4px/4px 'Liberation Mono',monospace;font-weight:700;transform:scaleX(0.8333);transform-origin:0 0;opacity:0.9"><span style="color:#d4d4d4">    </span><span style="color:#569cd6">var</span><span style="color:#d4d4d4"> </span><span style="color:#9cdcfe">count</span><span style="color:#d4d4d4"> </span><span style="color:#4ec9b0">int</span><span style="color:#d4d4d4"> = </span><span style="color:#b5cea8">0</span></div>
<div class="t" style="left:2940px;top:219px;font:4px/4px 'Liberation Mono',monospace;font-weight:700;transform:scaleX(0.8333);transform-origin:0 0;opacity:0.9"><span style="color:#d4d4d4">    </span><span style="color:#569cd6">var</span><span style="color:#d4d4d4"> </span><span style="color:#9cdcfe">wg</span><span style="color:#d4d4d4"> </span><span style="color:#4ec9b0">sync</span><span style="color:#d4d4d4">.</span><span style="color:#4ec9b0">WaitGroup</span></div>
<div class="t" style="left:2940px;top:223px;font:4px/4px 'Liberation Mono',monospace;font-weight:700;transform:scaleX(0.8333);transform-origin:0 0;opacity:0.9"><span style="color:#d4d4d4">    </span><span style="color:#9cdcfe">wg</span><span style="color:#d4d4d4">.</span><span style="color:#dcdcaa">Add</span><span style="color:#da70d6">(</span><span style="color:#b5cea8">10</span><span style="color:#da70d6">)</span></div>
<div class="t" style="left:2940px;top:227px;font:4px/4px 'Liberation Mono',monospace;font-weight:700;transform:scaleX(0.8333);transform-origin:0 0;opacity:0.9"><span style="color:#d4d4d4">    </span><span style="color:#c586c0">for</span><span style="color:#d4d4d4"> </span><span style="color:#9cdcfe">i</span><span style="color:#d4d4d4"> := </span><span style="color:#b5cea8">0</span><span style="color:#d4d4d4">; </span><span style="color:#9cdcfe">i</span><span style="color:#d4d4d4"> &lt; </span><span style="color:#b5cea8">10</span><span style="color:#d4d4d4">; </span><span style="color:#9cdcfe">i</span><span style="color:#d4d4d4">++ </span><span style="color:#da70d6">{</span></div>
<div class="t" style="left:2940px;top:231px;font:4px/4px 'Liberation Mono',monospace;font-weight:700;transform:scaleX(0.8333);transform-origin:0 0;opacity:0.9"><span style="color:#d4d4d4">        </span><span style="color:#c586c0">go</span><span style="color:#d4d4d4"> </span><span style="color:#569cd6">func</span><span style="color:#179fff">()</span><span style="color:#d4d4d4"> </span><span style="color:#179fff">{</span></div>
<div class="t" style="left:2940px;top:235px;font:4px/4px 'Liberation Mono',monospace;font-weight:700;transform:scaleX(0.8333);transform-origin:0 0;opacity:0.9"><span style="color:#d4d4d4">            </span><span style="color:#c586c0">defer</span><span style="color:#d4d4d4"> </span><span style="color:#9cdcfe">wg</span><span style="color:#d4d4d4">.</span><span style="color:#dcdcaa">Done</span><span style="color:#ffd700">()</span></div>
<div class="t" style="left:2940px;top:239px;font:4px/4px 'Liberation Mono',monospace;font-weight:700;transform:scaleX(0.8333);transform-origin:0 0;opacity:0.9"><span style="color:#d4d4d4">            </span><span style="color:#c586c0">for</span><span style="color:#d4d4d4"> </span><span style="color:#9cdcfe">j</span><span style="color:#d4d4d4"> := </span><span style="color:#b5cea8">0</span><span style="color:#d4d4d4">; </span><span style="color:#9cdcfe">j</span><span style="color:#d4d4d4"> &lt; </span><span style="color:#b5cea8">100000</span><span style="color:#d4d4d4">; </span><span style="color:#9cdcfe">j</span><span style="color:#d4d4d4">++ </span><span style="color:#ffd700">{</span></div>
<div class="t" style="left:2940px;top:243px;font:4px/4px 'Liberation Mono',monospace;font-weight:700;transform:scaleX(0.8333);transform-origin:0 0;opacity:0.9"><span style="color:#d4d4d4">                </span><span style="color:#9cdcfe">count</span><span style="color:#d4d4d4">++</span></div>
<div class="t" style="left:2940px;top:247px;font:4px/4px 'Liberation Mono',monospace;font-weight:700;transform:scaleX(0.8333);transform-origin:0 0;opacity:0.9"><span style="color:#d4d4d4">            </span><span style="color:#ffd700">}</span></div>
<div class="t" style="left:2940px;top:251px;font:4px/4px 'Liberation Mono',monospace;font-weight:700;transform:scaleX(0.8333);transform-origin:0 0;opacity:0.9"><span style="color:#d4d4d4">        </span><span style="color:#179fff">}()</span></div>
<div class="t" style="left:2940px;top:259px;font:4px/4px 'Liberation Mono',monospace;font-weight:700;transform:scaleX(0.8333);transform-origin:0 0;opacity:0.9"><span style="color:#d4d4d4">    </span><span style="color:#da70d6">}</span></div>
<div class="t" style="left:2940px;top:263px;font:4px/4px 'Liberation Mono',monospace;font-weight:700;transform:scaleX(0.8333);transform-origin:0 0;opacity:0.9"><span style="color:#d4d4d4">    </span><span style="color:#9cdcfe">wg</span><span style="color:#d4d4d4">.</span><span style="color:#dcdcaa">Wait</span><span style="color:#da70d6">()</span></div>
<div class="t" style="left:2940px;top:267px;font:4px/4px 'Liberation Mono',monospace;font-weight:700;transform:scaleX(0.8333);transform-origin:0 0;opacity:0.9"><span style="color:#d4d4d4">    </span><span style="color:#9cdcfe">fmt</span><span style="color:#d4d4d4">.</span><span style="color:#dcdcaa">Println</span><span style="color:#da70d6">(</span><span style="color:#9cdcfe">count</span><span style="color:#da70d6">)</span></div>
<div class="t" style="left:2940px;top:271px;font:4px/4px 'Liberation Mono',monospace;font-weight:700;transform:scaleX(0.8333);transform-origin:0 0;opacity:0.9"><span style="color:#ffd700">}</span></div>
<div class="r" style="left:3172px;top:184px;width:28px;height:1082px;background:#1f1f1f;box-sizing:border-box;border-left:1px solid #111214;border-top:1px solid #111214;"></div>
<div class="r" style="left:3173px;top:455px;width:27px;height:4px;background:#8a8a88;"></div>
<div class="t" style="left:825.60px;top:1293.07px;font-size:23.30px;line-height:23.30px;color:#9d9d9d;font-family:'Liberation Sans', sans-serif;font-weight:400;transform:scale(0.8364,1.0000);transform-origin:0 19.73px;">PROBLEMS</div>
<div class="r" style="left:953px;top:1285px;width:36px;height:36px;border-radius:50%;background:#616161"></div>
<div class="t" style="left:964.79px;top:1291.93px;font-size:23.00px;line-height:23.00px;color:#ffffff;font-family:'Liberation Sans', sans-serif;font-weight:400;transform:scale(1.0498,1.0000);transform-origin:0 19.47px;">2</div>
<div class="t" style="left:1033.06px;top:1293.07px;font-size:23.30px;line-height:23.30px;color:#9d9d9d;font-family:'Liberation Sans', sans-serif;font-weight:400;transform:scale(0.8551,1.0000);transform-origin:0 19.73px;">OUTPUT</div>
<div class="t" style="left:1162.88px;top:1293.07px;font-size:23.30px;line-height:23.30px;color:#9d9d9d;font-family:'Liberation Sans', sans-serif;font-weight:400;transform:scale(0.8460,1.0000);transform-origin:0 19.73px;">DEBUG CONSOLE</div>
<div class="t" style="left:1383.05px;top:1293.07px;font-size:23.30px;line-height:23.30px;color:#e7e7e7;font-family:'Liberation Sans', sans-serif;font-weight:400;transform:scale(0.8669,1.0000);transform-origin:0 19.73px;">TERMINAL</div>
<div class="r" style="left:1379px;top:1323px;width:110px;height:3px;background:#0078d4;"></div>
<div class="t" style="left:1532.47px;top:1293.07px;font-size:23.30px;line-height:23.30px;color:#9d9d9d;font-family:'Liberation Sans', sans-serif;font-weight:400;transform:scale(0.8022,1.0000);transform-origin:0 19.73px;">PORTS</div>
<svg class="r" style="left:2656px;top:1287px;" width="32" height="32" viewBox="0 0 32 32"><rect x="3" y="3" width="26" height="26" rx="3" stroke="#cccccc" stroke-width="2" fill="none"/><path d="M9 10L15 15.5L9 21M16 22H23" stroke="#cccccc" stroke-width="2" fill="none"/></svg>
<div class="t" style="left:2695.72px;top:1291.68px;font-size:24.00px;line-height:24.00px;color:#cccccc;font-family:'Liberation Sans', sans-serif;font-weight:400;transform:scale(0.9007,1.0000);transform-origin:0 20.32px;">zsh - go_learn</div>
<svg class="r" style="left:2852px;top:1287px;" width="30" height="30" viewBox="0 0 30 30"><path d="M15 2V28M2 15H28" stroke="#cccccc" stroke-width="2.2" fill="none"/></svg>
<svg class="r" style="left:2890px;top:1296px;" width="20" height="14" viewBox="0 0 20 14"><path d="M2.5 3L10 10.5L17.5 3" stroke="#cccccc" stroke-width="2" fill="none"/></svg>
<svg class="r" style="left:2932px;top:1287px;" width="30" height="30" viewBox="0 0 30 30"><rect x="2.5" y="2.5" width="25" height="25" rx="3" stroke="#cccccc" stroke-width="2" fill="none"/><path d="M15 2.5V27.5" stroke="#cccccc" stroke-width="2"/></svg>
<svg class="r" style="left:2983px;top:1287px;" width="28" height="30" viewBox="0 0 28 30"><g fill="none" stroke="#cccccc" stroke-width="2"><path d="M2 6H26M9 6V3H19V6"/><path d="M5 6L6.5 27H21.5L23 6"/><path d="M11 10V23M14 10V23M17 10V23"/></g></svg>
<div class="r" style="left:3037.3px;top:1301px;width:4.4px;height:4.4px;border-radius:50%;background:#cccccc"></div>
<div class="r" style="left:3047.5px;top:1301px;width:4.4px;height:4.4px;border-radius:50%;background:#cccccc"></div>
<div class="r" style="left:3057.8px;top:1301px;width:4.4px;height:4.4px;border-radius:50%;background:#cccccc"></div>
<svg class="r" style="left:3090px;top:1293px;" width="24" height="16" viewBox="0 0 24 16"><path d="M2 13L12 3L22 13" stroke="#cccccc" stroke-width="2.2" fill="none"/></svg>
<svg class="r" style="left:3143px;top:1291px;" width="22" height="22" viewBox="0 0 22 22"><path d="M2 2L20 20M20 2L2 20" stroke="#cccccc" stroke-width="2.2" fill="none"/></svg>
<svg class="r" style="left:826px;top:1357px;" width="30" height="20" viewBox="0 0 30 20"><path d="M3 10H22M15.5 3L23 10L15.5 17" stroke="#23d18b" stroke-width="5" stroke-linecap="round" stroke-linejoin="round" fill="none"/></svg>
<div class="t" style="left:826.00px;top:1355.59px;font:27.30px/27.30px 'Liberation Mono',monospace;transform:scaleX(0.9188);transform-origin:0 0"><span style="color:#cccccc;font-weight:400">   </span><span style="color:#29b8db;font-weight:700">go_learn</span><span style="color:#cccccc;font-weight:400"> go run .</span></div>
<svg class="r" style="left:826px;top:1425px;" width="30" height="20" viewBox="0 0 30 20"><path d="M3 10H22M15.5 3L23 10L15.5 17" stroke="#23d18b" stroke-width="5" stroke-linecap="round" stroke-linejoin="round" fill="none"/></svg>
<div class="t" style="left:826.00px;top:1423.59px;font:27.30px/27.30px 'Liberation Mono',monospace;transform:scaleX(0.9188);transform-origin:0 0"><span style="color:#cccccc;font-weight:400">   </span><span style="color:#29b8db;font-weight:700">go_learn</span><span style="color:#cccccc;font-weight:400"> go run .</span></div>
<svg class="r" style="left:826px;top:1493px;" width="30" height="20" viewBox="0 0 30 20"><path d="M3 10H22M15.5 3L23 10L15.5 17" stroke="#23d18b" stroke-width="5" stroke-linecap="round" stroke-linejoin="round" fill="none"/></svg>
<div class="t" style="left:826.00px;top:1491.59px;font:27.30px/27.30px 'Liberation Mono',monospace;transform:scaleX(0.9188);transform-origin:0 0"><span style="color:#cccccc;font-weight:400">   </span><span style="color:#29b8db;font-weight:700">go_learn</span></div>
<div class="t" style="left:826.00px;top:1389.59px;font:27.30px/27.30px 'Liberation Mono',monospace;transform:scaleX(0.9188);transform-origin:0 0"><span style="color:#cccccc;font-weight:400">270139</span></div>
<div class="t" style="left:826.00px;top:1457.59px;font:27.30px/27.30px 'Liberation Mono',monospace;transform:scaleX(0.9188);transform-origin:0 0"><span style="color:#cccccc;font-weight:400">331609</span></div>
<div class="r" style="left:800px;top:1359px;width:16.4px;height:16.4px;border-radius:50%;background:#1f80ae"></div>
<div class="r" style="left:800px;top:1427px;width:16.4px;height:16.4px;border-radius:50%;background:#1f80ae"></div>
<div class="r" style="left:799.5px;top:1495px;width:17px;height:17px;border-radius:50%;box-sizing:border-box;border:3px solid #5f5f5f"></div>
<div class="r" style="left:1006px;top:1486px;width:15px;height:34px;background:#cccccc;"></div>
<div class="r" style="left:3172px;top:1350px;width:1px;height:510px;background:#0e0e0e;"></div>
<div class="r" style="left:3173px;top:1350px;width:9px;height:5px;background:#555555;"></div>
<div class="r" style="left:3173px;top:1362.6px;width:9px;height:17.0px;background:#1b80b2;"></div>
<div class="r" style="left:3173px;top:1486px;width:9px;height:11px;background:#1b80b2;"></div>
<div class="r" style="left:3173px;top:1603px;width:9px;height:12px;background:#1b80b2;"></div>
<div class="r" style="left:3173px;top:1749px;width:9px;height:12px;background:#1b80b2;"></div>
<div class="r" style="left:3173px;top:1786px;width:9px;height:11px;background:#1b80b2;"></div>
<div class="r" style="left:3173px;top:1820px;width:27px;height:40px;background:rgba(121,121,121,0.35);"></div>
<div class="r" style="left:3173px;top:1835px;width:9px;height:16px;background:#4fa3cc;"></div>
<div class="r" style="left:3190.6px;top:1350px;width:9.4px;height:16px;background:#f14c4c;"></div>
<div class="r" style="left:3190.6px;top:1722px;width:9.4px;height:16px;background:#f14c4c;"></div>
<div class="r" style="left:3190.6px;top:1745.7px;width:9.4px;height:10.899999999999864px;background:#f14c4c;"></div>
<div class="r" style="left:3190.6px;top:1762px;width:9.4px;height:12px;background:#f14c4c;"></div>
<div class="r" style="left:3190.6px;top:1783px;width:9.4px;height:11.700000000000045px;background:#f14c4c;"></div>
<div class="r" style="left:3190.6px;top:1799px;width:9.4px;height:16.5px;background:#f14c4c;"></div>
<div class="r" style="left:3190.6px;top:1825.7px;width:9.4px;height:14.299999999999955px;background:#f14c4c;"></div>
<div class="r" style="left:2688px;top:1495px;width:432px;height:71px;box-sizing:border-box;border:2px solid #3b3b3b;border-radius:15px;background:#232323;box-shadow:0 14px 50px rgba(0,0,0,0.38)"></div>
<div class="r" style="left:2690px;top:1497px;width:46px;height:67px;border-radius:13px 0 0 13px;background:#1e1e1e"></div>
<div class="r" style="left:2735px;top:1497px;width:2px;height:67px;background:#3b3b3b;"></div>
<div class="r" style="left:2709px;top:1515px;width:6px;height:32px;border-radius:3px;background:#a0a0a0"></div>
<svg class="r" style="left:2746px;top:1512px;" width="44" height="44" viewBox="0 0 44 44"><g fill="none" stroke="#fff" stroke-width="2.6"><path d="M3 8H41M14 2V14M30 2V14"/><path d="M9 20H35V30M9 20V30"/><path d="M22 14V30M3 30H41"/><path d="M21 31Q16 40 4 43M23 31Q28 40 40 43"/></g></svg>
<svg class="r" style="left:2813px;top:1509px;" width="42" height="44" viewBox="0 0 42 44"><path d="M22 2.5 A19.5 19.5 0 1 1 2.5 31.5 A 24 24 0 0 0 22 2.5Z" fill="none" stroke="#fff" stroke-width="2.6" stroke-linejoin="round"/></svg>
<div class="r" style="left:2881px;top:1516.5px;width:12px;height:12px;border-radius:50%;background:#fff"></div>
<svg class="r" style="left:2895px;top:1530px;" width="16" height="18" viewBox="0 0 16 18"><path d="M6 2H12L7 16H2Z" fill="#fff"/></svg>
<svg class="r" style="left:2938px;top:1511px;" width="44" height="44" viewBox="0 0 44 44"><g fill="none" stroke="#fff" stroke-width="2.6"><path d="M9 2L4 11M7 6H18M12.5 7L14.5 11M27 2L22 11M25 6H40M31 7L33 11"/><path d="M6 15L8.5 18.5M6 20V43M13 18H39V40Q39 43 35 43H32"/><path d="M17 24H31V37.5H17ZM17 30.5H31"/></g></svg>
<svg class="r" style="left:3002px;top:1509px;" width="44" height="44" viewBox="0 0 44 44"><circle cx="22" cy="22" r="19.5" fill="none" stroke="#fff" stroke-width="2.6"/><circle cx="15" cy="17" r="2.6" fill="#fff"/><circle cx="29" cy="17" r="2.6" fill="#fff"/><path d="M12 26Q22 36 32 26" fill="none" stroke="#fff" stroke-width="2.6"/></svg>
<svg class="r" style="left:3068px;top:1510px;" width="40" height="42" viewBox="0 -1 40 42"><path d="M32.33 14.50 L37.97 15.60 L37.97 24.40 L32.33 25.50 L30.93 27.92 L32.79 33.36 L25.18 37.76 L21.40 33.43 L18.60 33.43 L14.82 37.76 L7.21 33.36 L9.07 27.92 L7.67 25.50 L2.03 24.40 L2.03 15.60 L7.67 14.50 L9.07 12.08 L7.21 6.64 L14.82 2.24 L18.60 6.57 L21.40 6.57 L25.18 2.24 L32.79 6.64 L30.93 12.08Z" fill="none" stroke="#fff" stroke-width="2.6" stroke-linejoin="round"/><circle cx="20" cy="20" r="6" fill="none" stroke="#fff" stroke-width="2.6"/></svg>
<div class="r" style="left:0px;top:1862px;width:181px;height:42px;background:#0078d4;"></div>
<svg class="r" style="left:22px;top:1868px;" width="24" height="28" viewBox="0 0 24 28"><path d="M3 25L11 17L3 9M21 3L13 11L21 19" stroke="#ffffff" stroke-width="2.2" fill="none"/></svg>
<div class="t" style="left:54.90px;top:1871.68px;font-size:24.00px;line-height:24.00px;color:#ffffff;font-family:'Liberation Sans', sans-serif;font-weight:400;transform:scale(0.9290,1.0000);transform-origin:0 20.32px;">WSL: Arch</div>
<svg class="r" style="left:197px;top:1868px;" width="28" height="28" viewBox="0 0 28 28"><circle cx="14" cy="14" r="11.3" stroke="#cccccc" stroke-width="2" fill="none"/><path d="M9.5 9.5L18.5 18.5M18.5 9.5L9.5 18.5" stroke="#cccccc" stroke-width="2" fill="none"/></svg>
<div class="t" style="left:231.62px;top:1871.68px;font-size:24.00px;line-height:24.00px;color:#cccccc;font-family:'Liberation Sans', sans-serif;font-weight:400;transform:scale(1.0460,1.0000);transform-origin:0 20.32px;">0</div>
<svg class="r" style="left:251px;top:1868px;" width="28" height="28" viewBox="0 0 28 28"><path d="M14 3L26 24.5H2Z" stroke="#cccccc" stroke-width="2" fill="none" stroke-linejoin="round"/><path d="M14 10V17" stroke="#cccccc" stroke-width="2.4"/><circle cx="14" cy="20.5" r="1.4" fill="#cccccc"/></svg>
<div class="t" style="left:285.75px;top:1871.68px;font-size:24.00px;line-height:24.00px;color:#cccccc;font-family:'Liberation Sans', sans-serif;font-weight:400;transform:scale(1.0335,1.0000);transform-origin:0 20.32px;">2</div>
<svg class="r" style="left:332px;top:1866px;" width="28" height="30" viewBox="0 0 28 30"><g fill="none" stroke="#cccccc" stroke-width="2"><path d="M6.5 3.8Q1.8 11.8 6.5 19.8M21.5 3.8Q26.2 11.8 21.5 19.8M10 7Q7 11.8 10 16.6M18 7Q21 11.8 18 16.6"/><circle cx="14" cy="10.8" r="2.1"/><path d="M13 12.8L7 28M15 12.8L21 28M9.5 21.5H18.5"/></g></svg>
<div class="t" style="left:365.04px;top:1871.68px;font-size:24.00px;line-height:24.00px;color:#cccccc;font-family:'Liberation Sans', sans-serif;font-weight:400;transform:scale(1.0198,1.0000);transform-origin:0 20.32px;">0</div>
<div class="t" style="left:2175.80px;top:1871.68px;font-size:24.00px;line-height:24.00px;color:#cccccc;font-family:'Liberation Sans', sans-serif;font-weight:400;transform:scale(0.9630,1.0000);transform-origin:0 20.32px;">Ln 14, Col 19</div>
<div class="t" style="left:2347.22px;top:1871.68px;font-size:24.00px;line-height:24.00px;color:#cccccc;font-family:'Liberation Sans', sans-serif;font-weight:400;transform:scale(0.8847,1.0000);transform-origin:0 20.32px;">Tab Size: 4</div>
<div class="t" style="left:2485.65px;top:1871.68px;font-size:24.00px;line-height:24.00px;color:#cccccc;font-family:'Liberation Sans', sans-serif;font-weight:400;transform:scale(0.9447,1.0000);transform-origin:0 20.32px;">UTF-8</div>
<div class="t" style="left:2580.27px;top:1871.68px;font-size:24.00px;line-height:24.00px;color:#cccccc;font-family:'Liberation Sans', sans-serif;font-weight:400;transform:scale(0.8773,1.0000);transform-origin:0 20.32px;">LF</div>
<svg class="r" style="left:2633px;top:1868px;" width="28" height="28" viewBox="0 0 28 28"><g fill="none" stroke="#cccccc" stroke-width="2"><path d="M9 3.5Q5.5 3.5 5.5 7V11Q5.5 14 3 14Q5.5 14 5.5 17V21Q5.5 24.5 9 24.5"/><path d="M19 3.5Q22.5 3.5 22.5 7V11Q22.5 14 25 14Q22.5 14 22.5 17V21Q22.5 24.5 19 24.5"/></g></svg>
<div class="t" style="left:2671.83px;top:1871.68px;font-size:24.00px;line-height:24.00px;color:#cccccc;font-family:'Liberation Sans', sans-serif;font-weight:400;transform:scale(0.9698,1.0000);transform-origin:0 20.32px;">Go</div>
<div class="t" style="left:2731.66px;top:1871.68px;font-size:24.00px;line-height:24.00px;color:#cccccc;font-family:'Liberation Sans', sans-serif;font-weight:400;transform:scale(0.8976,1.0000);transform-origin:0 20.32px;">1.23.1</div>
<svg class="r" style="left:2798px;top:1868px;" width="22" height="28" viewBox="0 0 22 28"><path d="M13 2L4 15H11L8 26L18 11H11L15 2Z" stroke="#cccccc" stroke-width="1.8" fill="none" stroke-linejoin="round"/></svg>
<svg class="r" style="left:2854px;top:1868px;" width="28" height="28" viewBox="0 0 28 28"><g fill="none" stroke="#cccccc" stroke-width="2"><path d="M7 19Q3 15.5 3 11Q3 3 14 3Q25 3 25 11Q25 15.5 21 19"/><path d="M10 15.5Q8 13.5 8 11Q8 7.5 14 7.5Q20 7.5 20 11Q20 13.5 18 15.5"/></g><circle cx="14" cy="11.5" r="2.2" fill="#cccccc"/><rect x="11.5" y="15" width="5" height="12" rx="1.5" fill="#cccccc"/></svg>
<div class="t" style="left:2887.45px;top:1871.68px;font-size:24.00px;line-height:24.00px;color:#cccccc;font-family:'Liberation Sans', sans-serif;font-weight:400;transform:scale(0.9535,1.0000);transform-origin:0 20.32px;">Go Live</div>
<svg class="r" style="left:2998px;top:1868px;" width="28" height="28" viewBox="0 0 28 28"><circle cx="14" cy="14" r="11.3" stroke="#cccccc" stroke-width="2" fill="none"/><path d="M6 22L22 6" stroke="#cccccc" stroke-width="2"/></svg>
<div class="t" style="left:3032.00px;top:1871.68px;font-size:24.00px;line-height:24.00px;color:#cccccc;font-family:'Liberation Sans', sans-serif;font-weight:400;transform:scale(1.0135,1.0000);transform-origin:0 20.32px;">Prettier</div>
<svg class="r" style="left:3143px;top:1867px;" width="26" height="30" viewBox="0 0 26 30"><g fill="none" stroke="#cccccc" stroke-width="2" stroke-linejoin="round"><path d="M4 22H22L19.5 18.5V12Q19.5 4 13 4Q6.5 4 6.5 12V18.5Z"/><path d="M10 25.5Q10.5 27.5 13 27.5Q15.5 27.5 16 25.5"/></g></svg>
</body></html>
